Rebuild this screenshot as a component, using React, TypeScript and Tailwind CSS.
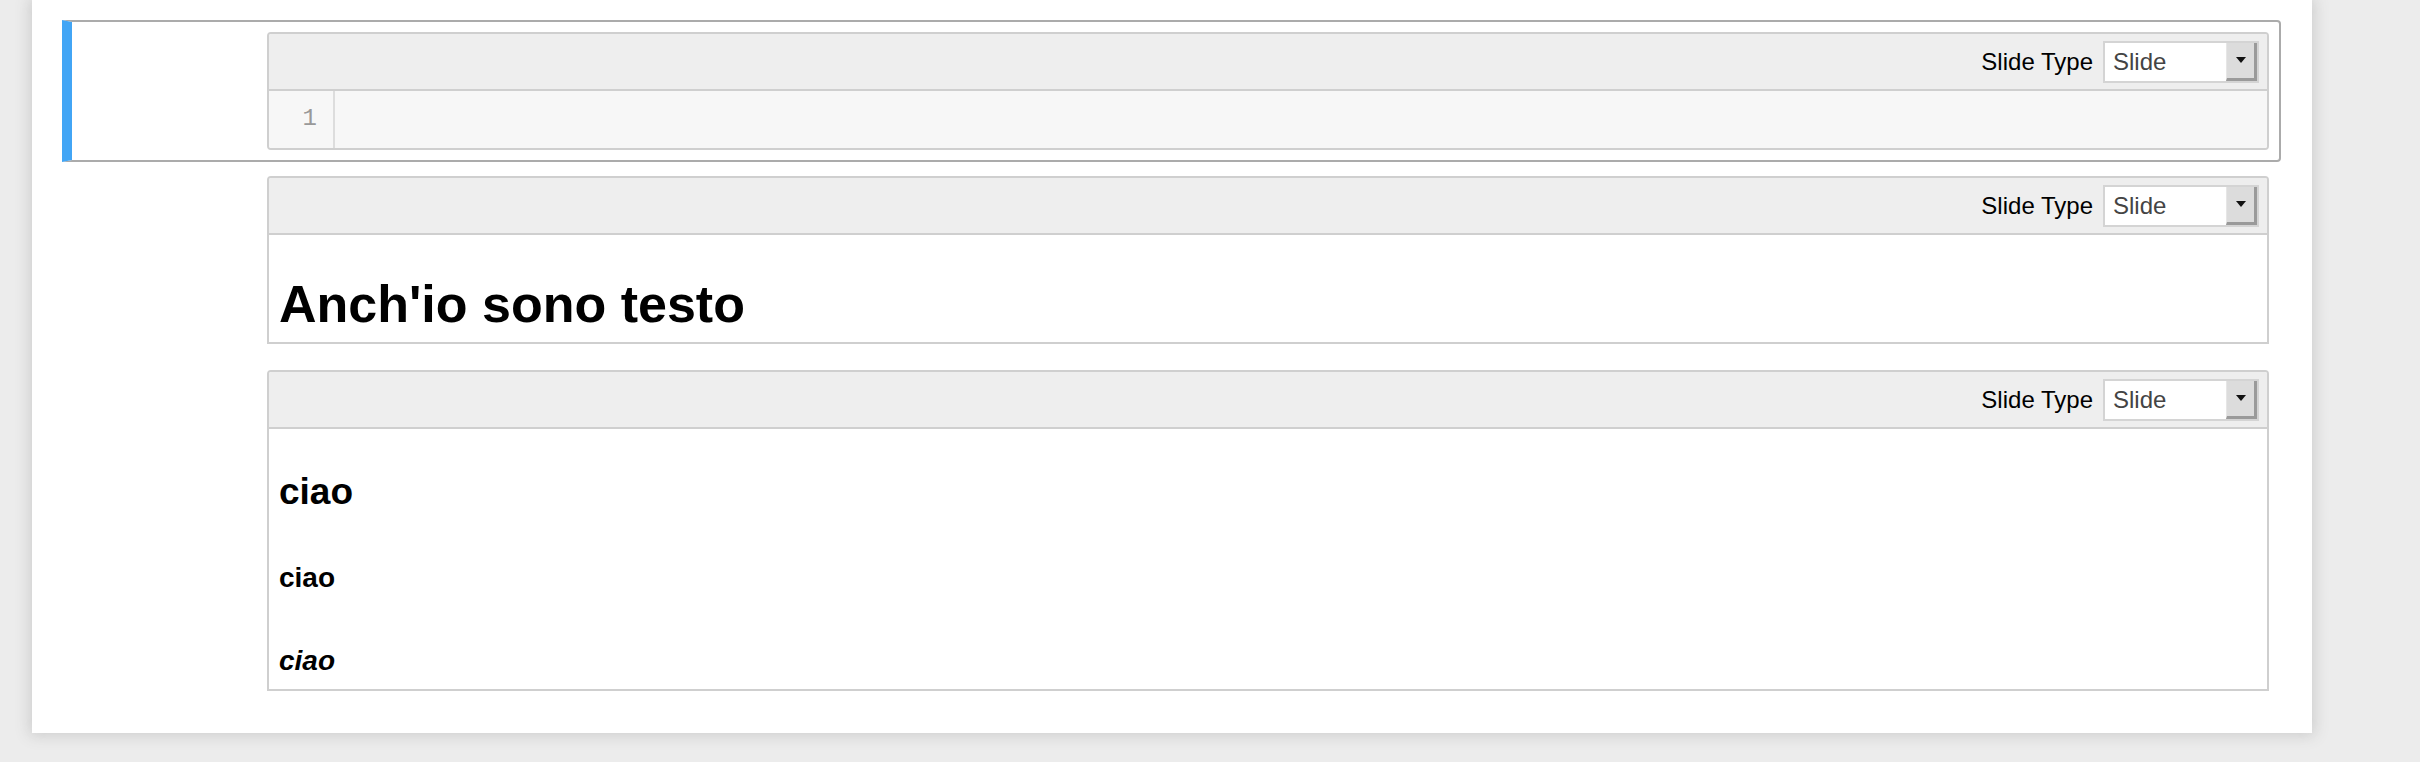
import React from "react";

const sans = { fontFamily: '"Liberation Sans", Arial, Helvetica, sans-serif' };

function SlideSelect() {
  return (
    <div className="flex h-[42px] w-[156px] border-2 border-[#d4d4d4] bg-white">
      <div className="flex flex-1 items-center pl-[8px] text-[24px] leading-none text-[#444]">Slide</div>
      <div className="flex w-[31px] items-center justify-center border-l border-l-[#e6e6e6] border-r-[3px] border-r-[#9a9a9a] border-b-[3px] border-b-[#9a9a9a] bg-[#dcdcdc]">
        <svg width="12" height="8" viewBox="0 0 12 8">
          <polygon points="1,1 11,1 6,7" fill="#111" />
        </svg>
      </div>
    </div>
  );
}

function Toolbar() {
  return (
    <div className="flex h-[57px] shrink-0 items-center justify-end gap-[10px] border-b-2 border-[#cfcfcf] bg-[#eeeeee] pr-[8px]">
      <span className="text-[24px] leading-none text-black">Slide Type</span>
      <SlideSelect />
    </div>
  );
}

export default function App() {
  return (
    <div className="min-h-[762px] w-full bg-[#ececec]" style={sans}>
      <div className="ml-[32px] h-[733px] w-[2280px] bg-white pt-[20px] shadow-[0_0_14px_2px_rgba(87,87,87,0.22)]">
        {/* Cell 1 - selected code cell */}
        <div className="ml-[30px] flex h-[142px] w-[2219px] rounded-r-[4px] border-2 border-l-[10px] border-[#ababab] border-l-[#42a5f5] py-[10px] pr-[10px]">
          <div className="w-[195px] shrink-0" />
          <div className="flex flex-1 flex-col overflow-hidden rounded-[4px] border-2 border-[#cfcfcf]">
            <Toolbar />
            <div className="flex flex-1 bg-[#f7f7f7]">
              <div
                className="flex w-[66px] items-center justify-end border-r-2 border-[#dddddd] pr-[16px] pb-[2px] text-[24px] leading-none text-[#999]"
                style={{ fontFamily: '"Liberation Mono", "DejaVu Sans Mono", monospace' }}
              >
                1
              </div>
              <div className="flex-1" />
            </div>
          </div>
        </div>

        {/* Cell 2 - markdown h1 */}
        <div className="ml-[235px] mt-[14px] w-[2002px] overflow-hidden rounded-t-[4px] border-2 border-[#cfcfcf]">
          <Toolbar />
          <div className="h-[107px] px-[10px] pt-[43px]">
            <h1 className="text-[52px] font-bold leading-[52px] text-black">Anch'io sono testo</h1>
          </div>
        </div>

        {/* Cell 3 - markdown h3/h4/h5 */}
        <div className="ml-[235px] mt-[26px] w-[2002px] overflow-hidden rounded-t-[4px] border-2 border-[#cfcfcf]">
          <Toolbar />
          <div className="h-[260px] px-[10px] pt-[44px]">
            <h3 className="text-[37px] font-bold leading-[37px] text-black">ciao</h3>
            <h4 className="mt-[54px] text-[28px] font-bold leading-[28px] text-black">ciao</h4>
            <h5 className="mt-[55px] text-[28px] font-bold italic leading-[28px] text-black">ciao</h5>
          </div>
        </div>
      </div>
    </div>
  );
}
